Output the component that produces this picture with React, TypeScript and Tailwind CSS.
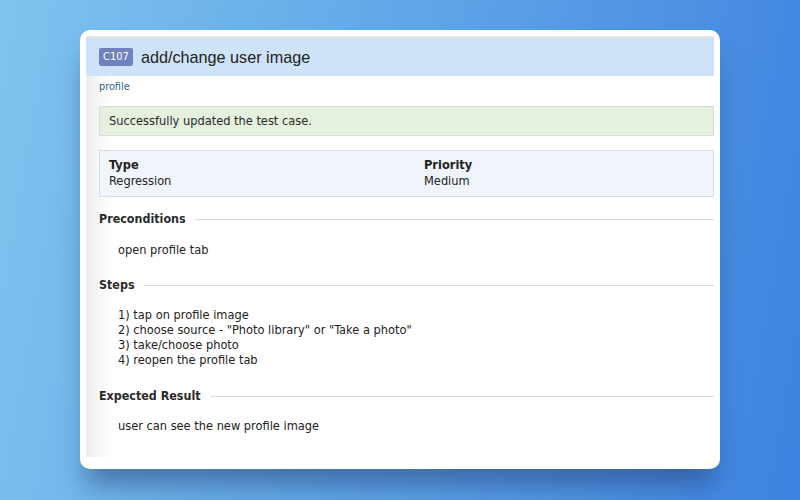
import React from "react";

const body = "font-['DejaVu_Sans',Verdana,sans-serif] [font-stretch:condensed]";

function Section({ title, mtHead, mtContent, children }: { title: string; mtHead: string; mtContent: string; children: React.ReactNode }) {
  return (
    <div className={mtHead}>
      <div className="flex items-center gap-[9px] h-[16px]">
        <span className="font-bold text-[12.4px] leading-[16px] text-[#2a2a2a] whitespace-nowrap">{title}</span>
        <div className="flex-1 h-px bg-[#d9d9d9]" />
      </div>
      <div className={`${mtContent} pl-[19px] text-[12.7px] leading-[15px] text-[#222]`}>{children}</div>
    </div>
  );
}

export default function App() {
  return (
    <div className="w-[800px] h-[500px] overflow-hidden bg-[linear-gradient(100deg,#7fc3ee_0%,#67aeea_35%,#4f93e3_75%,#3c82e0_100%)] flex justify-center pt-[30px]">
      <div className="w-[640px] h-[439px] bg-white rounded-[10px] pt-[6px] px-[6px] pb-[12px] shadow-[0_22px_26px_-6px_rgba(40,65,120,0.55)]">
        <div className={`h-full border-t-2 border-[#e4e4e4] bg-[linear-gradient(to_right,#ececec_0px,#f6f6f6_12px,#ffffff_26px)] ${body}`}>
          <div className="h-[38px] bg-[#cfe3f8] flex items-center pl-[13px] gap-[8px]">
            <span className="bg-[#7181c0] text-white text-[11px] leading-[18px] h-[18px] w-[34px] text-center rounded-[2px]">C107</span>
            <span className="font-['Liberation_Sans',Arial,sans-serif] text-[16.2px] text-[#222] leading-none">add/change user image</span>
          </div>
          <div className="pl-[13px]">
            <div className="h-[21px] leading-[21px] text-[10.8px] text-[#2a6389]">profile</div>
            <div className="mt-[9px] h-[30px] border border-[#d3dfcc] bg-[#e5f0de] flex items-center pl-[9px] text-[12.7px] text-[#2a2a2a]">
              Successfully updated the test case.
            </div>
            <div className="mt-[14px] h-[47px] border border-[#d6dde4] bg-[#eff5fb] pt-[6px] pl-[9px] grid grid-cols-[315px_1fr] text-[12.7px] leading-[16px] text-[#222]">
              <div>
                <div className="font-bold">Type</div>
                <div>Regression</div>
              </div>
              <div>
                <div className="font-bold">Priority</div>
                <div>Medium</div>
              </div>
            </div>
            <Section title="Preconditions" mtHead="mt-[14px]" mtContent="mt-[15px]">
              <div>open profile tab</div>
            </Section>
            <Section title="Steps" mtHead="mt-[20px]" mtContent="mt-[14px]">
              <div>1) tap on profile image</div>
              <div>2) choose source - "Photo library" or "Take a photo"</div>
              <div>3) take/choose photo</div>
              <div>4) reopen the profile tab</div>
            </Section>
            <Section title="Expected Result" mtHead="mt-[21px]" mtContent="mt-[14px]">
              <div>user can see the new profile image</div>
            </Section>
          </div>
        </div>
      </div>
    </div>
  );
}
